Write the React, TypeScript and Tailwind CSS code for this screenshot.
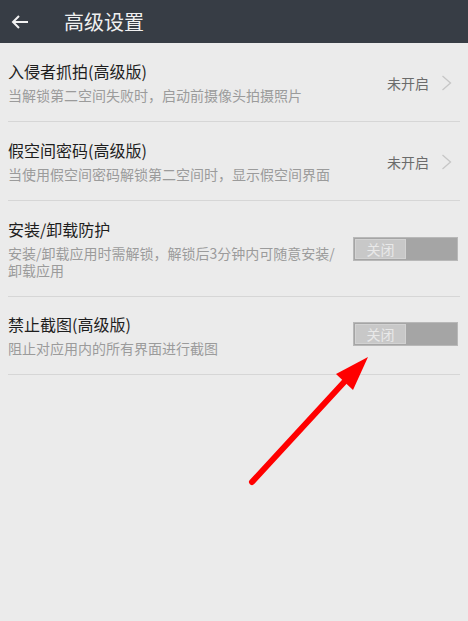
import React from "react";

const font = { fontFamily: '"Noto Sans CJK SC", "Noto Sans", sans-serif' };

function Chevron() {
  return (
    <svg width="12" height="16" viewBox="0 0 12 16" className="ml-[12px]">
      <path d="M1.5 1 L9.5 8 L1.5 15" fill="none" stroke="#c6c6c6" strokeWidth="1.3" />
    </svg>
  );
}

function Toggle() {
  return (
    <div className="w-[105px] h-[24px] bg-[#a5a5a5] border border-[#b8b8b8] flex p-[1px] mr-[2px]">
      <div className="w-[51px] h-full bg-[#c8c8c8] border border-[#d2d2d2] flex items-center justify-center text-[14px] text-[#e9e9e9] leading-none">
        关闭
      </div>
    </div>
  );
}

function Row({
  title,
  sub,
  right,
  h,
}: {
  title: string;
  sub: React.ReactNode;
  right: React.ReactNode;
  h: string;
}) {
  return (
    <div className={`flex items-center border-b border-[#d6d6d6] ${h}`}>
      <div className="flex-1 flex flex-col">
        <div className="text-[16px] leading-[20px] text-[#1e1e1e]">{title}</div>
        <div className="text-[14px] leading-[17px] text-[#9b9b9b] mt-[6px]">{sub}</div>
      </div>
      {right}
    </div>
  );
}

export default function App() {
  return (
    <div className="w-[468px] h-[621px] bg-[#ebebeb] relative overflow-hidden" style={font}>
      <div className="h-[43px] bg-[#373d45] flex items-center">
        <svg width="20" height="16" viewBox="0 0 20 16" className="ml-[10px]">
          <path d="M18 8 H3 M9 2 L3 8 L9 14" fill="none" stroke="#f2f2f2" strokeWidth="2" />
        </svg>
        <div className="ml-[34px] text-[20px] text-[#f0f0f0] leading-none">高级设置</div>
      </div>
      <div className="pl-[8px] pr-[8px]">
        <Row
          h="h-[79px]"
          title="入侵者抓拍(高级版)"
          sub="当解锁第二空间失败时，启动前摄像头拍摄照片"
          right={
            <div className="flex items-center text-[14px] text-[#6b6b6b] mr-[7px] mt-[2px]">
              未开启
              <Chevron />
            </div>
          }
        />
        <Row
          h="h-[79px]"
          title="假空间密码(高级版)"
          sub="当使用假空间密码解锁第二空间时，显示假空间界面"
          right={
            <div className="flex items-center text-[14px] text-[#6b6b6b] mr-[7px] mt-[2px]">
              未开启
              <Chevron />
            </div>
          }
        />
        <Row
          h="h-[96px]"
          title="安装/卸载防护"
          sub={
            <span className="block w-[340px]">
              安装/卸载应用时需解锁，解锁后3分钟内可随意安装/卸载应用
            </span>
          }
          right={
            <div className="self-start mt-[36px]">
              <Toggle />
            </div>
          }
        />
        <Row
          h="h-[78px]"
          title="禁止截图(高级版)"
          sub="阻止对应用内的所有界面进行截图"
          right={
            <div className="mt-[-4px]">
              <Toggle />
            </div>
          }
        />
      </div>
      <svg className="absolute left-0 top-0" width="468" height="621" viewBox="0 0 468 621">
        <line x1="252" y1="482" x2="346" y2="380" stroke="#ff0000" strokeWidth="6" strokeLinecap="round" />
        <polygon points="368,357 336,374 353,390" fill="#ff0000" />
      </svg>
    </div>
  );
}
